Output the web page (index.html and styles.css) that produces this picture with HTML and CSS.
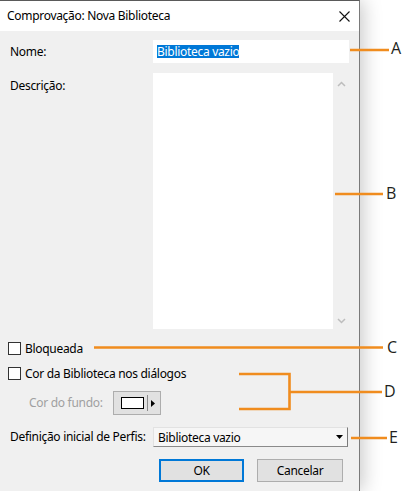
FILE: index.html
```html
<!DOCTYPE html>
<html lang="pt">
<head>
<meta charset="utf-8">
<title>Comprovação: Nova Biblioteca</title>
<link rel="stylesheet" href="styles.css">
</head>
<body>
<div class="page">
  <div class="dialog">
    <div class="titlebar">
      <span class="title">Comprovação: Nova Biblioteca</span>
      <svg class="close" width="11" height="11" viewBox="0 0 11 11"><path d="M0.5 0.5 L10.5 10.5 M10.5 0.5 L0.5 10.5" stroke="#111" stroke-width="1.1" fill="none"/></svg>
    </div>
    <div class="body">
      <div class="row row-name">
        <span class="label">Nome:</span>
        <div class="input"><span class="sel">Biblioteca vazio</span></div>
      </div>
      <div class="row row-desc">
        <span class="label label-top">Descrição:</span>
        <div class="textarea">
          <div class="ta-field"></div>
          <div class="scrollbar">
            <svg width="9" height="6" viewBox="0 0 9 6"><polyline points="1,5 4.5,1.5 8,5" fill="none" stroke="#bdbdbd" stroke-width="1.5"/></svg>
            <svg width="9" height="6" viewBox="0 0 9 6"><polyline points="1,1 4.5,4.5 8,1" fill="none" stroke="#bdbdbd" stroke-width="1.5"/></svg>
          </div>
        </div>
      </div>
      <div class="check check-lock"><span class="box"></span><span>Bloqueada</span></div>
      <div class="check check-color"><span class="box"></span><span>Cor da Biblioteca nos diálogos</span></div>
      <div class="row row-bg">
        <span class="label label-disabled">Cor do fundo:</span>
        <div class="colorbtn">
          <span class="swatch"></span>
          <span class="divider"></span>
          <svg width="4" height="7" viewBox="0 0 4 7"><polygon points="0,0 4,3.5 0,7" fill="#000"/></svg>
        </div>
      </div>
      <div class="row row-profile">
        <span class="label">Definição inicial de Perfis:</span>
        <div class="select">
          <span>Biblioteca vazio</span>
          <svg width="7" height="4" viewBox="0 0 7 4"><polygon points="0,0 7,0 3.5,4" fill="#000"/></svg>
        </div>
      </div>
      <div class="buttons">
        <button class="btn btn-ok">OK</button>
        <button class="btn">Cancelar</button>
      </div>
    </div>
  </div>
  <svg class="callouts" width="417" height="491" viewBox="0 0 417 491">
    <g stroke="#f08c1e" stroke-width="2.6" fill="none">
      <line x1="350" y1="50" x2="389" y2="50"/>
      <line x1="335" y1="194" x2="383" y2="194"/>
      <line x1="94" y1="347.5" x2="383" y2="347.5"/>
      <polyline points="239,374 289.5,374 289.5,409 239,409"/>
      <line x1="289.5" y1="392" x2="382" y2="392"/>
      <line x1="351" y1="438" x2="387" y2="438"/>
    </g>
    <g class="letters" fill="#231f20">
      <text x="391" y="54">A</text>
      <text x="386" y="199">B</text>
      <text x="387" y="353">C</text>
      <text x="384" y="397">D</text>
      <text x="389" y="443">E</text>
    </g>
  </svg>
</div>
</body>
</html>
```

FILE: styles.css
```css
* { box-sizing: border-box; }
html, body { margin: 0; padding: 0; background: #ffffff; }
body { font-family: "Noto Sans", "Open Sans", sans-serif; font-size: 12px; letter-spacing: -0.3px; color: #000; }

.page { position: relative; width: 417px; height: 491px; overflow: hidden; }

.dialog {
  width: 360px;
  height: 491px;
  display: flex;
  flex-direction: column;
  border-top: 1px solid #5a5a5a;
  border-right: 1px solid #7a7a7a;
  box-shadow: 3px 0 18px rgba(0, 0, 0, 0.22);
  background: #f0f0f0;
}
.dialog > *, .body > * { flex-shrink: 0; }

.titlebar {
  height: 30px;
  background: #ffffff;
  display: flex;
  align-items: center;
  justify-content: space-between;
  padding: 0 9px 0 7px;
}
.title { line-height: 16px; }
.close { display: block; }

.body { flex: 1 1 auto; display: flex; flex-direction: column; }

.row { display: flex; align-items: center; padding-left: 10px; }
.label { width: 143px; line-height: 16px; white-space: nowrap; flex-shrink: 0; }
.label-top { align-self: flex-start; margin-top: 5px; }

.row-name { margin-top: 9px; }
.input {
  width: 196px;
  height: 23px;
  background: #ffffff;
  padding: 3px 0 0 4px;
}
.sel {
  display: inline-block;
  background: #0078d7;
  color: #ffffff;
  line-height: 13px;
  height: 13px;
}

.row-desc { margin-top: 10px; align-items: flex-start; }
.textarea { width: 196px; height: 256px; display: flex; }
.ta-field { width: 180px; background: #ffffff; }
.scrollbar {
  width: 16px;
  background: #f0f0f0;
  display: flex;
  flex-direction: column;
  justify-content: space-between;
  align-items: center;
  padding: 8px 0 5px 0;
}
.scrollbar svg { display: block; }

.check { display: flex; align-items: center; padding-left: 8px; gap: 4px; line-height: 13px; height: 13px; }
.check-lock { margin-top: 13px; }
.check-color { margin-top: 12px; }
.box { width: 13px; height: 13px; border: 1px solid #333333; background: #ffffff; }

.row-bg { margin-top: 11px; padding-left: 29px; }
.row-bg .label { width: 84px; }
.label-disabled { color: #a0a0a0; }
.colorbtn {
  width: 48px;
  height: 24px;
  background: #e1e1e1;
  border: 1px solid #adadad;
  display: flex;
  align-items: center;
  padding-left: 7px;
}
.swatch { width: 23px; height: 12px; border: 1px solid #000; background: #fff; }
.divider { width: 1px; height: 16px; background: #8a8a8a; margin: 0 3px 0 3px; }
.colorbtn svg { display: block; }

.row-profile { margin-top: 12px; }
.select {
  width: 195px;
  height: 20px;
  background: #f6f6f6;
  border-top: 1px solid #e2e2e2;
  border-left: 1px solid #e2e2e2;
  border-right: 1px solid #7a7a7a;
  border-bottom: 1px solid #8a8a8a;
  display: flex;
  align-items: center;
  justify-content: space-between;
  padding: 0 4px 0 4px;
}
.select svg { display: block; }

.buttons { display: flex; gap: 13px; padding-left: 159px; margin-top: 12px; }
.btn {
  width: 86px;
  height: 23px;
  background: #e1e1e1;
  border: 1px solid #adadad;
  font-family: inherit;
  font-size: 12px;
  letter-spacing: -0.3px;
  color: #000;
  padding: 0;
}
.btn-ok { width: 85px; border: 2px solid #0078d7; }

.callouts { position: absolute; left: 0; top: 0; pointer-events: none; }
.letters text { font-family: "Open Sans", "Noto Sans", sans-serif; font-size: 16px; letter-spacing: 0; }
```
